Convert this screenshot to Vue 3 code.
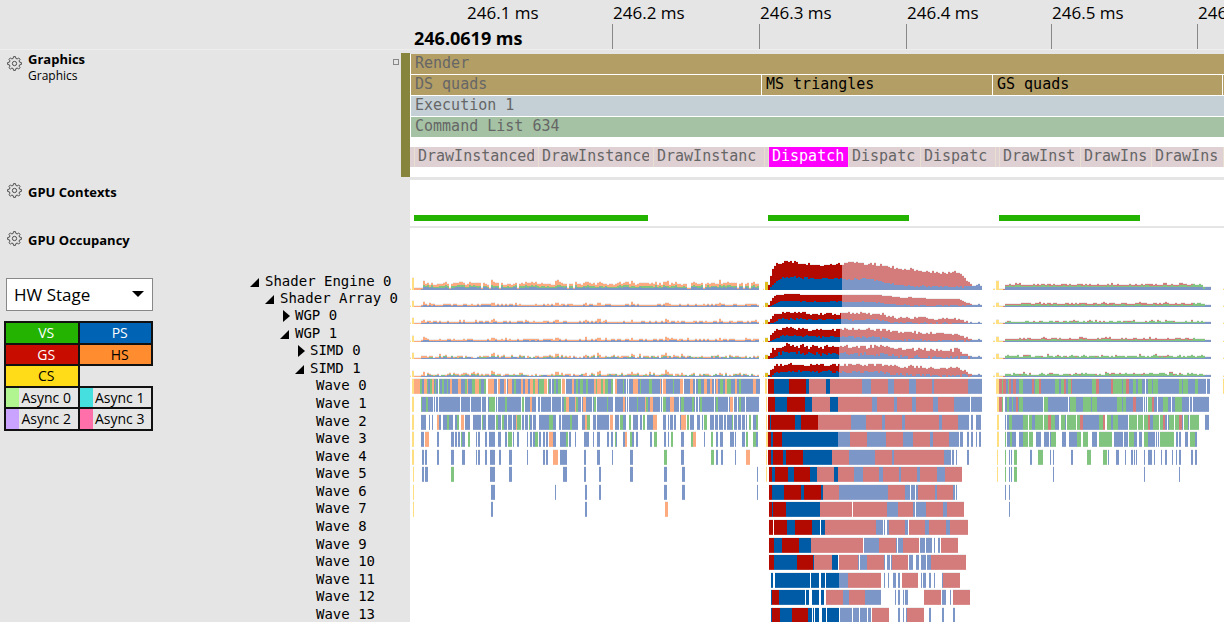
<script setup>
const palette = {
  y: '#ffdf80', o: '#fcaa80', g: '#80c480', b: '#7d96c8', r: '#d47b7b', R: '#b20a00', B: '#005ba6', h: '#efeeee', Y: '#e0c020'
}

const ticks = [
  { label: '246.1 ms', x: 57, line: false },
  { label: '246.2 ms', x: 203, line: true },
  { label: '246.3 ms', x: 350, line: true },
  { label: '246.4 ms', x: 497, line: true },
  { label: '246.5 ms', x: 642, line: true },
  { label: '246.6 ms', x: 788, line: true }
]

const passes = [
  { name: 'DS quads', w: 350, dim: true },
  { name: 'MS triangles', w: 230 },
  { name: 'GS quads', w: 229 },
  { name: '', w: 1 }
]

const calls = [
  { name: '', w: 5 }, { name: 'DrawInstanced', w: 124 }, { name: 'DrawInstance', w: 115 },
  { name: 'DrawInstanc', w: 111 }, { name: '', w: 4 }, { name: 'Dispatch', w: 80, on: true },
  { name: 'Dispatc', w: 72 }, { name: 'Dispatc', w: 75 }, { name: '', w: 4 },
  { name: 'DrawInst', w: 81 }, { name: 'DrawIns', w: 71 }, { name: 'DrawIns', w: 72 }
]
const callColumns = calls.map((c) => `minmax(0, ${c.w}fr)`).join(' ')

const contexts = [{ x: 4, w: 234 }, { x: 358, w: 141 }, { x: 589, w: 141 }]

const stages = [
  [{ n: 'VS', c: 'vs' }, { n: 'PS', c: 'ps' }],
  [{ n: 'GS', c: 'gs' }, { n: 'HS', c: 'hs' }],
  [{ n: 'CS', c: 'cs' }, { n: '', c: 'none' }],
  [{ n: 'Async 0', c: 'async a0' }, { n: 'Async 1', c: 'async a1' }],
  [{ n: 'Async 2', c: 'async a2' }, { n: 'Async 3', c: 'async a3' }]
]

const nodes = [
  { name: 'Shader Engine 0', depth: 0, open: true },
  { name: 'Shader Array 0', depth: 1, open: true },
  { name: 'WGP 0', depth: 2, open: false },
  { name: 'WGP 1', depth: 2, open: true },
  { name: 'SIMD 0', depth: 3, open: false },
  { name: 'SIMD 1', depth: 3, open: true }
]

// Each token is a colour key and the x at which it starts; "_" is an idle gap.
const waves = [
  'y2 o4 g10 b12 o14 g17 b18 g20 o22 b24 g25 b26 _28 g29 b30 g32 b34 g37 b38 o40 b42 o48 b51 g55 o57 b58 g62 o65 g69 b71 g74 _76 o78 b84 _87 o88 b90 o94 _96 b97 o98 b102 g104 b106 o111 b113 o115 b118 o120 g123 o125 b128 g129 o134 _137 g138 b139 _141 b142 g144 b146 g148 _151 o152 _155 b156 o162 b164 g166 b168 g170 b173 g176 b178 o184 g186 o187 g191 o193 g195 b198 g201 _203 o205 b207 g213 b214 _216 b217 _218 b219 o223 b228 g230 b231 g239 b242 o250 b251 _252 o253 b256 g263 b264 o270 _273 b274 o280 b283 _285 b286 g288 b291 o294 b297 o300 b302 _304 b305 o306 b308 g310 b313 o315 g317 b321 o325 b327 g329 b331 o343 b346 _350 y355 _357 R358 B364 R379 B396 r399 B416 r420 b452 r461 b478 r484 b499 r506 b522 r524 b558 _572 y586 r589 g592 r593 b596 g598 r599 b601 r603 b606 g609 b613 r622 b624 g625 r629 b631 g645 b649 g651 r654 b656 g658 r661 b662 g682 r686 b689 r701 g703 b712 g713 r716 b719 g723 b726 g728 b732 _735 b736 g738 b742 g743 b748 g769 b772 g773 b778 g785 b788 _796 b797 _800 y813 _814',
  'y2 _4 g11 b12 g16 b18 _23 b24 _25 b26 _28 b29 _50 b51 _60 b61 _71 b72 _76 b78 g79 _85 b86 _87 b88 g95 b97 _111 g112 _114 b115 o120 b122 _126 b128 _130 b131 _141 b142 _151 b152 g154 o156 b159 o165 g166 b168 _171 b172 o173 b176 _182 b183 g184 _186 b187 g197 b198 _203 b205 o213 b215 _216 b217 _218 b219 g227 b228 o235 g236 b238 o240 b243 _250 b251 _252 g253 b256 o260 b264 _269 b270 g271 b274 g282 b284 _285 b286 _288 b289 g290 b292 _304 b305 g306 b308 _318 b319 o320 _323 b324 _327 b328 g329 b331 _335 b336 _349 y356 _357 R358 B365 R377 B395 r402 B420 r428 b462 r467 b484 r487 b502 r506 b523 r528 b544 _560 b561 _572 y587 r589 g592 _593 b595 g597 b599 g602 b603 r606 b608 g609 b613 _633 g634 b638 _658 b659 g660 b666 g673 b681 g682 b687 g707 b712 g713 b716 r723 b726 _733 b734 _735 b736 _737 g738 r742 b744 _747 b748 g753 b758 _761 b762 g765 b772 _779 b780 _782 b783 _799',
  'y2 _4 b11 _16 b19 _20 b22 _23 o27 b29 _31 b33 g37 b39 _43 b45 g47 _49 o51 _54 b55 _60 b63 _71 g72 b73 _76 b78 _85 g86 b88 _91 g92 b94 _97 b98 _102 b103 o106 g107 _111 b112 _114 b115 _118 g119 b120 _122 b123 _126 b129 g139 b143 _146 b149 _151 b152 g160 b162 _168 b172 o175 g177 _180 b183 _186 b187 _199 o200 _203 b205 _209 g210 b213 _216 g219 _221 b223 _228 b230 _232 g233 _235 b237 o243 _247 b253 _256 b258 _259 b260 _263 b264 _266 b270 o271 _276 g277 _279 b280 _284 b287 _290 b292 _293 g294 _297 b300 _304 b305 _308 b309 _313 b314 _316 b317 g322 _323 b324 _327 b328 _331 b332 _335 b336 _337 g339 _341 b343 g346 _348 y356 _357 R358 B360 R361 B385 R391 r408 b441 r456 b472 r475 b492 r495 b529 r532 b548 _559 b561 _563 b566 _571 y587 _589 b595 _596 b597 g599 b602 g613 _618 g619 b622 g625 _633 g634 r638 g641 b645 _649 g651 b655 _656 g657 _666 g667 r670 b673 g689 r693 _695 g697 b701 g703 b708 _718 g719 _727 g728 _733 g734 r738 b740 g743 _749 g750 r753 b755 _757 b758 g759 _764 g765 r769 b772 _773 g774 b778 _779 g780 _789 b795 _799',
  'y2 _4 b11 _14 o15 _19 b27 _29 b41 _44 b45 _47 b48 _50 g51 b52 _55 g58 _60 b66 _67 b68 _70 b75 _77 b79 _85 b88 _91 b95 _97 g98 _102 b103 _104 b107 _109 b117 _118 b120 _122 b123 g125 _128 b129 _131 b133 _135 b136 _138 o139 b143 _146 b150 g156 _158 b159 _161 b165 _166 b174 _179 b183 _184 b187 _190 b197 _199 b201 _203 g205 b206 _207 b213 o215 _217 g220 b222 _224 b226 _228 b240 _242 g244 _247 b254 _256 b258 _259 g261 _263 b271 _274 g281 o283 _286 b294 _295 g301 _303 b306 _308 b310 _313 b320 _324 b325 _326 b332 _335 g336 _338 g343 b346 _348 y356 _358 R358 B361 R363 B372 b428 r440 b457 r476 b493 r503 b520 r523 b539 _549 b550 _553 b557 _559 b561 _563 b566 _567 b569 _571 y587 _589 g595 _596 b597 g600 b602 _606 b609 g613 _618 g619 _623 b626 _631 b634 _639 b640 g641 _646 b652 _656 b659 g667 _671 g673 _678 b682 _687 g689 _702 b704 _713 b714 _718 g719 b724 _727 b729 _732 g734 b738 _745 b746 _747 b748 _749 g750 _764 b766 _768 b769 _771 b775 _778 g780 b785 _787',
  'y2 _4 b12 _14 b15 _17 b27 _29 b41 _44 b52 _55 b66 _67 b68 _70 b75 _77 b80 _85 b89 _91 b99 _102 b117 _118 b133 _135 b136 _138 o143 _148 b150 _157 b174 _176 b187 _190 b202 _203 b220 _223 g254 _257 b271 _274 g301 _304 b306 _308 b311 _313 b325 _326 o336 _340 y356 _357 R358 B361 R363 B373 R376 B393 r422 b439 r465 b482 r484 b534 _541 b542 _544 b546 _547 b557 _559 y587 _588 g595 _596 b599 _600 b601 _602 g604 _607 b620 _622 g628 _633 b640 _641 b643 _644 b661 _663 g677 _681 g693 _697 b698 _699 b706 _709 b715 _716 b721 _723 b724 _725 b726 _727 b734 _735 b738 _742 b744 _745 b751 _752 b755 _757 b762 _763 b766 _767 b769 _771 b781 _783 b785 _787',
  'y3 _4 b12 _14 b15 _18 g41 _44 b80 _85 b99 _102 b153 _157 b174 _176 b189 _191 b220 _223 b254 _257 b272 _275 b347 _348 y356 _357 R359 B362 R365 B378 R384 B400 r407 B424 r428 b444 r453 b469 r473 b489 r491 b507 r510 b527 r535 _552 y587 _588 g595 _596 b599 _600 b601 _602 g604 _607 b643 _644 b734 _735 b769 _770',
  'y3 _4 b81 _85 b145 _146 b175 _177 b189 _191 b254 _257 b272 _275 b347 _348 R359 B362 R374 B391 R394 B411 r413 b429 r478 b495 _500 b501 _505 b506 r508 b525 r527 b543 _545 b546 _547 b595 _596 b599 _600',
  'y3 _4 b81 _83 b175 _177 o255 _258 R359 B362 R363 B376 r410 _442 r443 b477 r488 b503 _505 b506 r516 b533 r537 _554 b599 _600',
  'R359 _363 R364 B377 R385 B402 _410 B411 r415 b466 _473 b474 _475 b477 r479 b495 _498 r499 b515 r519 b536 r540 _558',
  'R359 B364 R372 B389 r401 _453 b454 r469 b486 _487 b488 r493 _509 b510 _515 b516 _522 b524 _525 b528 _530 r531 _548',
  'R359 B364 R387 B403 r404 B422 _428 r429 b448 _449 b450 r457 b474 _475 b477 _480 b481 r482 _498 b499 _503 b506 _509 b511 _516 b517 r521 _556',
  'B361 _363 B365 _400 B401 _409 B411 _415 B416 b429 r438 _471 b474 _475 b478 _479 b483 _486 b488 _490 r492 _508 b511 _512 b513 _516 b519 _521 b524 _525 b532 r533 _550',
  'B361 R362 B369 _395 B396 _399 B402 _409 B411 _414 r416 b433 r439 b455 _471 b485 _486 b488 _490 b493 _494 b495 _498 r514 _531 b532 _536 b540 _541 r543 _560',
  'B361 R362 B370 R382 B398 _402 B403 _404 B405 _409 B412 _416 B417 _429 b430 _442 b443 _449 b450 _457 b458 _461 r462 _479 b488 _490 b493 _494 b496 r497 _514 b519 _521 b532 _534 b543 _545'
].map((text) => {
  const tokens = text.split(' ').map((t) => ({ k: t[0], x: Number(t.slice(1)) }))
  return tokens
    .map((t, i) => ({ ...t, w: i + 1 < tokens.length ? tokens[i + 1].x - t.x : 0 }))
    .filter((t) => t.k !== '_' && t.w > 0)
})

// Piecewise-linear occupancy envelopes: [x, level]
const total = [[358, 5], [360, 14], [362, 20], [364, 24], [366, 26], [372, 27], [376, 29], [384, 28], [396, 26], [410, 25], [428, 26], [440, 27], [460, 26], [470, 25], [480, 23], [492, 20], [500, 21], [508, 19], [520, 18], [530, 17], [547, 18], [552, 13], [558, 8], [563, 3], [568, 6], [573, 1]]
const pixel = [[358, 0], [362, 5], [366, 9], [372, 13], [385, 13], [396, 12], [410, 11], [428, 12], [440, 11], [460, 11], [470, 9], [480, 6], [490, 5], [500, 4], [550, 3], [561, 3], [563, 3], [568, 6], [573, 1]]

function level(points, x) {
  for (let i = 1; i < points.length; i++) {
    const [x1, v1] = points[i]
    const [x0, v0] = points[i - 1]
    if (x <= x1) return v0 + ((v1 - v0) * (x - x0)) / (x1 - x0)
  }
  return 0
}

const settings = [
  { scale: 1, late: 1, noise: 2, edge: 432, height: 34, yellow: 12, y3: 9, low: [2, 2, 2], high: [3, 1, 1], spike: 0.5 },
  { scale: 0.46, late: 1, noise: 1, edge: 432, height: 17, yellow: 6, y3: 4, low: [1, 0, 1], high: [1, 1, 1], spike: 0.08 },
  { scale: 0.4, late: 0.75, noise: 2, edge: 431, height: 17, yellow: 6, y3: 4, low: [1, 0, 1], high: [1, 1, 0], spike: 0.1 },
  { scale: 0.48, late: 1, noise: 2, edge: 430, height: 17, yellow: 6, y3: 5, low: [1, 0, 1], high: [1, 1, 1], spike: 0.1 },
  { scale: 0.47, late: 1.1, noise: 4, edge: 429, height: 17, yellow: 6, y3: 5, low: [1, 1, 1], high: [1, 2, 0], spike: 0.2 },
  { scale: 0.46, late: 1.1, noise: 3, edge: 429, height: 17, yellow: 6, y3: 4, low: [1, 1, 1], high: [1, 2, 0], spike: 0.2 }
]

function histogram(s, seed) {
  let state = seed * 7919 + 17
  const rand = () => {
    state = (state * 1103515245 + 12345) % 2147483648
    return state / 2147483648
  }
  const engine = s.height > 20
  const paths = {}
  const column = (x, w, stack) => {
    let y = s.height
    for (const [k, h] of stack) {
      if (h <= 0) continue
      y -= h
      paths[k] = (paths[k] || '') + `M${x} ${y}h${w}v${h}h${-w}z`
    }
    paths.h = (paths.h || '') + `M${x} ${y - 1}h${w}v1h${-w}z`
  }
  column(0, 1, [['y', 1]])
  column(2, 2, [['y', s.yellow]])
  column(4, 7, [['o', engine ? 2 : 1]])
  for (let x = 11; x < 349; x += 2) {
    const idle = rand() < 0.06
    const near = [12, 81, 145, 174, 187, 220, 255, 308].some((p) => x >= p && x < p + 3)
    const [b, g, o] = s.low
    const spike = rand() < s.spike ? 1 : 0
    const blue = b + (rand() < 0.35 ? 1 : 0)
    const green = g ? Math.floor(rand() * 2) + g - 1 : 0
    const orange = o + spike + (near ? 2 : 0) - (g && !engine && rand() < 0.4 ? 1 : 0)
    column(x, 2, idle ? [['b', 1], ['o', 1]] : [['b', blue], ['g', green], ['o', orange]])
  }
  column(353, 1, [['y', 1]])
  column(355, 3, [['Y', Math.round(s.yellow * 0.65)]])
  for (let x = 358; x < 571; x += 2) {
    const k = s.scale * (x > 475 ? s.late : 1)
    const wobble = Math.round((rand() - 0.5) * s.noise)
    const sum = Math.min(s.height - 1, Math.max(1, Math.round(level(total, x) * k) + (x < 560 ? wobble : 0)))
    const low = x >= 562 ? sum : Math.max(0, Math.min(sum, Math.round(level(pixel, x) * k + (rand() - 0.5) * s.noise)))
    const live = x < s.edge
    column(x, Math.min(2, live ? s.edge - x : 2), [[live ? 'B' : 'b', low], [live ? 'R' : 'r', sum - low]])
    if (live && s.edge - x < 2) column(s.edge, 1, [['b', low], ['r', sum - low]])
  }
  column(583, 2, [['y', 1]])
  column(586, 3, [['y', s.y3]])
  column(589, 4, [['y', 1]])
  column(593, 2, [['r', 1]])
  for (let x = 595; x < 795; x += 2) {
    const [b, g, r] = s.high
    const extra = rand() < 0.22 ? 1 : 0
    const tail = x > 781
    const blue = x > 791 ? 1 : b
    const green = g + (tail ? r : 0) + (rand() < 0.25 ? 1 : 0) - (g > 1 && rand() < 0.3 ? 1 : 0)
    const red = tail ? 0 : r ? r + extra : rand() < 0.2 ? 1 : 0
    column(x, 2, [['b', blue], ['g', green], ['r', red]])
  }
  column(795, 6, [['b', engine ? 3 : 2]])
  column(813, 1, [['y', 1]])
  return Object.entries(paths)
}

const charts = settings.map((s, i) => ({ height: s.height, paths: histogram(s, i + 1) }))

// Outline of an eight-toothed gear, centred in a 16x16 box.
const gear = Array.from({ length: 8 }, (_, i) =>
  [[-8, 7.4], [8, 7.4], [15, 5.6], [30, 5.6]].map(([deg, radius]) => {
    const a = ((i * 45 + deg) * Math.PI) / 180
    return `${(8 + radius * Math.sin(a)).toFixed(2)},${(8 - radius * Math.cos(a)).toFixed(2)}`
  }).join(' ')
).join(' ')
</script>

<template>
  <main class="profiler">
    <header class="band ruler-band">
      <div></div>
      <div class="ruler">
        <div v-for="t in ticks" :key="t.label" class="tick" :class="{ lined: t.line }" :style="{ left: t.x / 8.14 + '%' }">
          <span>{{ t.label }}</span>
        </div>
        <strong class="cursor-time">246.0619 ms</strong>
      </div>
    </header>

    <section class="band graphics-band">
      <div class="side">
        <div class="heading">
          <button class="gear" aria-label="Graphics settings">
            <svg viewBox="0 0 16 16"><polygon :points="gear" /><circle cx="8" cy="8" r="2.3" /></svg>
          </button>
          <div>
            <h2>Graphics</h2>
            <p>Graphics</p>
          </div>
        </div>
        <button class="collapse" aria-label="Collapse Graphics"></button>
        <div class="queue-mark"></div>
      </div>
      <div class="tracks">
        <div class="bar tan dim">Render</div>
        <div class="bar-row">
          <div v-for="(p, i) in passes" :key="i" class="bar tan" :class="{ dim: p.dim }" :style="{ flexGrow: p.w }">{{ p.name }}</div>
        </div>
        <div class="bar steel dim">Execution 1</div>
        <div class="bar sage dim">Command List 634</div>
        <div class="call-row" :style="{ gridTemplateColumns: callColumns }">
          <div v-for="(c, i) in calls" :key="i" class="call" :class="{ on: c.on, sliver: !c.name }"><span>{{ c.name }}</span></div>
        </div>
      </div>
    </section>

    <section class="band contexts-band">
      <div class="side">
        <div class="heading">
          <button class="gear" aria-label="GPU Contexts settings">
            <svg viewBox="0 0 16 16"><polygon :points="gear" /><circle cx="8" cy="8" r="2.3" /></svg>
          </button>
          <h2>GPU Contexts</h2>
        </div>
      </div>
      <div class="context-track">
        <svg viewBox="0 0 814 6" preserveAspectRatio="none" shape-rendering="crispEdges">
          <rect v-for="c in contexts" :key="c.x" :x="c.x" y="0" :width="c.w" height="6" fill="#24b300" />
        </svg>
      </div>
    </section>

    <section class="band occupancy-band">
      <div class="side occupancy-side">
        <div class="controls">
          <div class="heading">
            <button class="gear" aria-label="GPU Occupancy settings">
              <svg viewBox="0 0 16 16"><polygon :points="gear" /><circle cx="8" cy="8" r="2.3" /></svg>
            </button>
            <h2>GPU Occupancy</h2>
          </div>
          <div class="picker">
            <select aria-label="Color by"><option>HW Stage</option></select>
            <svg viewBox="0 0 12 6"><path d="M0 0h12L6 6z" /></svg>
          </div>
          <table class="legend">
            <tbody>
              <tr v-for="(row, i) in stages" :key="i">
                <td v-for="(s, j) in row" :key="j" :class="s.c">{{ s.n }}</td>
              </tr>
            </tbody>
          </table>
        </div>
        <div class="rows tree">
          <div v-for="n in nodes" :key="n.name" class="node" :class="'depth-' + n.depth">
            <button :aria-label="'Toggle ' + n.name" :aria-expanded="n.open">
              <svg viewBox="0 0 10 12"><path :d="n.open ? 'M9 2v9H0z' : 'M3 0v12l7-6z'" /></svg>
            </button>
            <span>{{ n.name }}</span>
          </div>
          <div v-for="(w, i) in waves" :key="i" class="node leaf"><span>Wave {{ i }}</span></div>
        </div>
      </div>
      <div class="rows plot">
        <div v-for="(c, i) in charts" :key="'c' + i" class="lane">
          <svg :class="{ tall: c.height > 20 }" :viewBox="`0 0 814 ${c.height}`" preserveAspectRatio="none" shape-rendering="crispEdges">
            <path v-for="[k, d] in c.paths" :key="k" :d="d" :fill="palette[k]" />
          </svg>
        </div>
        <div v-for="(w, i) in waves" :key="'w' + i" class="lane">
          <svg viewBox="0 0 814 17" preserveAspectRatio="none" shape-rendering="crispEdges">
            <g v-for="(s, j) in w" :key="j">
              <rect :x="s.x" y="1" :width="s.w" height="1" fill="#efeeee" />
              <rect :x="s.x" y="2" :width="s.w" height="15" :fill="palette[s.k]" />
              <rect :x="s.x" y="16" :width="s.w" height="1" fill="#ffffff" opacity="0.15" />
            </g>
          </svg>
        </div>
      </div>
    </section>
  </main>
</template>

<style>
body {
  margin: 0;
  overflow: hidden;
}
</style>

<style scoped>
.profiler {
  display: flex;
  flex-direction: column;
  height: 100vh;
  overflow: hidden;
  background: #fff;
  color: #000;
  font-family: "Open Sans", "Noto Sans", sans-serif;
}
.band {
  display: grid;
  grid-template-columns: 410px minmax(0, 1fr);
  flex: none;
}
.ruler-band {
  height: 49px;
  background: #e5e5e5;
  border-bottom: 1px solid #eee;
}
.ruler {
  position: relative;
  overflow: hidden;
}
.tick {
  position: absolute;
  top: 0;
  font-size: 17px;
  line-height: 26px;
  white-space: nowrap;
}
.tick.lined::after {
  content: "";
  display: block;
  width: 1px;
  height: 25px;
  margin: -2px 0 0 -1px;
  background: #888;
}
.cursor-time {
  position: absolute;
  left: 4px;
  top: 26px;
  font-size: 18px;
  line-height: 24px;
}
.side {
  position: relative;
  background: #e5e5e5;
}
.heading {
  display: flex;
  align-items: flex-start;
  gap: 6px;
  padding-left: 7px;
}
h2, p {
  margin: 0;
  font-size: 13px;
  line-height: 18px;
}
p {
  font-size: 12px;
  line-height: 16px;
}
button {
  padding: 0;
  border: 0;
  background: none;
}
.gear {
  width: 15px;
  height: 15px;
}
.gear svg {
  display: block;
  width: 15px;
  height: 15px;
  fill: none;
  stroke: #444;
  stroke-width: 1;
}
.graphics-band {
  height: 127px;
  border-bottom: 3px solid #e5e5e5;
}
.graphics-band .gear {
  margin-top: 6px;
}
.collapse {
  position: absolute;
  right: 11px;
  top: 9px;
  width: 6px;
  height: 6px;
  border: 1px solid #888;
}
.queue-mark {
  position: absolute;
  right: 0;
  top: 3px;
  bottom: 0;
  width: 9px;
  background: #87843e;
}
.tracks {
  display: flex;
  flex-direction: column;
  gap: 1px;
  padding-left: 1px;
  border-top: 4px solid #e5e5e5;
  font-family: "DejaVu Sans Mono", monospace;
  font-size: 15px;
}
.bar {
  flex: none;
  box-sizing: border-box;
  height: 20px;
  padding-left: 4px;
  line-height: 19px;
  white-space: nowrap;
  overflow: hidden;
}
.bar-row {
  display: flex;
  gap: 1px;
}
.bar-row .bar {
  flex: 1 1 0;
  padding: 0;
  text-indent: 4px;
}
.dim {
  color: #666;
}
.tan {
  background: #b39e66;
}
.steel {
  background: #c4d0d6;
}
.sage {
  background: #a5c2a5;
}
.call-row {
  display: grid;
  height: 20px;
  margin: 9px 0 0 -1px;
  background: #dfd0d4;
  color: #666;
}
.call {
  box-sizing: border-box;
  padding: 0 4px 0 3px;
  border-right: 1px solid #e8dfd0;
  line-height: 18px;
}
.call.sliver {
  padding: 0;
}
.call span {
  display: block;
  overflow: hidden;
  white-space: nowrap;
}
.call.on {
  padding-right: 0;
  background: #f0f;
  color: #fff;
}
.contexts-band {
  height: 46px;
  border-bottom: 2px solid #e5e5e5;
}
.contexts-band .heading {
  padding-top: 3px;
}
.context-track {
  display: flex;
  align-items: flex-end;
  padding-bottom: 5px;
}
.context-track svg {
  display: block;
  width: 100%;
  height: 6px;
}
.occupancy-band {
  flex: 1 0 0;
  min-height: 0;
}
.occupancy-side {
  display: grid;
  grid-template-columns: 249px 1fr;
}
.controls {
  padding-top: 3px;
}
.picker {
  position: relative;
  width: 147px;
  margin: 29px 0 0 6px;
}
.picker select {
  display: block;
  box-sizing: border-box;
  width: 100%;
  height: 33px;
  padding: 0 7px;
  appearance: none;
  border: 1px solid #888;
  border-radius: 0;
  background: #fff;
  color: #000;
  font: 17px "Open Sans", sans-serif;
}
.picker svg {
  position: absolute;
  right: 9px;
  top: 13px;
  width: 12px;
  height: 6px;
  pointer-events: none;
}
.legend {
  width: 149px;
  margin: 10px 0 0 4px;
  border-collapse: collapse;
  table-layout: fixed;
  font-size: 14px;
  line-height: 19px;
}
.legend tr:nth-child(odd) {
  line-height: 20px;
}
.legend td {
  padding: 0 0 0 9px;
  border: 2px solid #111;
  text-align: center;
  white-space: nowrap;
}
.vs { background: #24b300; color: #fff; }
.ps { background: #0063b3; color: #fff; }
.gs { background: #c80c00; color: #fff; }
.hs { background: #ff8c2e; }
.cs { background: #ffdc17; }
.legend .none { border-right: 0; }
.a0 { background: linear-gradient(90deg, #b0f590 13px, #e5e5e5 13px); }
.a1 { background: linear-gradient(90deg, #45dfdf 13px, #e5e5e5 13px); }
.a2 { background: linear-gradient(90deg, #c9a3ff 13px, #e5e5e5 13px); }
.a3 { background: linear-gradient(90deg, #ff70aa 13px, #e5e5e5 13px); }
.rows {
  display: grid;
  grid-template-rows: 62px 17px 17px 18px 17px 18px 17px;
  grid-auto-rows: 18px 18px 17px 18px 17px 18px 17px;
  align-content: start;
}
.tree {
  font-family: "DejaVu Sans Mono", monospace;
  font-size: 14px;
}
.node {
  display: flex;
  align-items: flex-end;
  gap: 5px;
  line-height: 18px;
  white-space: nowrap;
}
.node button {
  display: block;
  width: 10px;
  height: 17px;
}
.node button svg {
  display: block;
  width: 10px;
  height: 12px;
}
.depth-0 { padding-left: 1px; }
.depth-1 { padding-left: 16px; }
.depth-2 { padding-left: 31px; }
.depth-3 { padding-left: 46px; }
.leaf { padding-left: 67px; }
.lane {
  display: flex;
  align-items: flex-end;
  min-width: 0;
}
.lane svg {
  display: block;
  width: 100%;
  height: 17px;
}
.lane svg.tall {
  height: 34px;
}
</style>
